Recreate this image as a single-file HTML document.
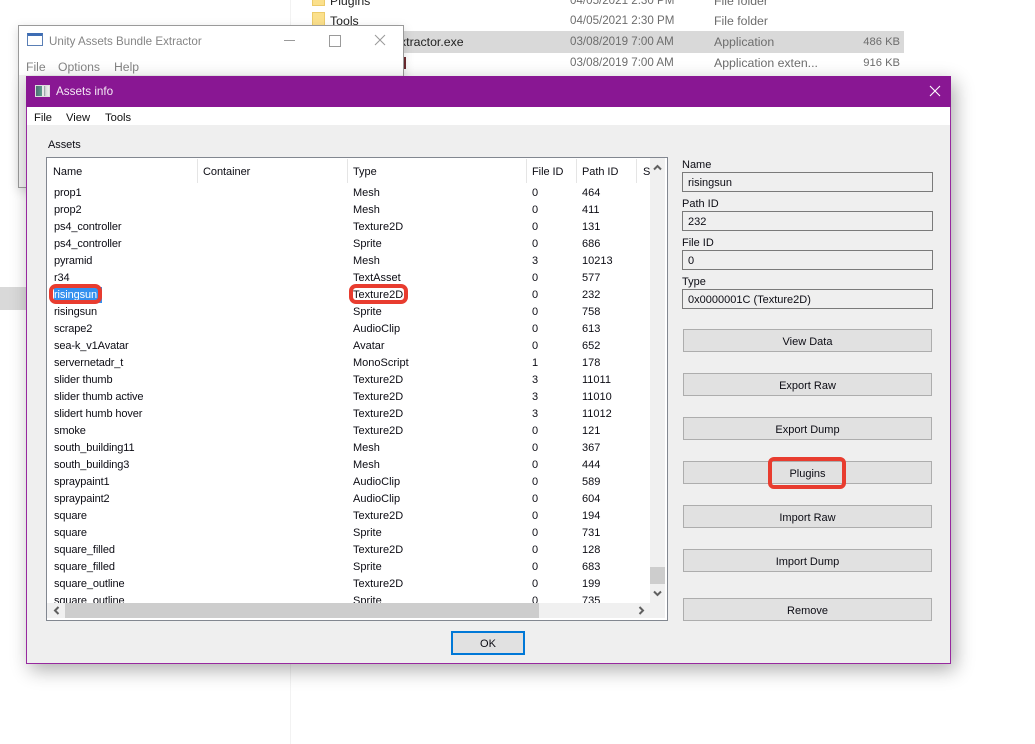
<!DOCTYPE html>
<html><head><meta charset="utf-8">
<style>
html,body{margin:0;padding:0;background:#fff;}
body{width:1035px;height:744px;position:relative;overflow:hidden;font-family:"Liberation Sans",sans-serif;font-size:11px;color:#0c0c14;}
.a{position:absolute;white-space:nowrap;}
.ex{font-size:12.3px;color:#6d6d6d;line-height:16px;}
.d{font-size:11.6px;}
.z{font-size:11.2px;}
.g{color:#858585;font-size:12.2px;line-height:16px;}
.m{font-size:11.2px;line-height:14px;color:#111;}
.h{line-height:14px;letter-spacing:-.05px;}
.sep{position:absolute;top:159px;width:1px;height:24px;background:#e5e5e5;}
.list{position:absolute;left:47px;top:184px;width:603px;height:419px;overflow:hidden;background:#fff;}
.r{position:absolute;left:0;height:17px;line-height:16px;white-space:nowrap;}
.r span{position:absolute;top:1px;}
.r span:nth-child(1){left:7px;letter-spacing:-.12px;}
.r span:nth-child(2){left:306px;}
.r span:nth-child(3){left:485px;}
.r span:nth-child(4){left:535px;}
.lb{position:absolute;left:682px;line-height:14px;white-space:nowrap;}
.f{position:absolute;left:682px;height:18px;border:1px solid #7a7a7a;background:#efefef;line-height:20px;padding-left:5px;box-sizing:content-box;width:244px;}
.b{position:absolute;left:683px;width:247px;height:21px;border:1px solid #adadad;background:#e1e1e1;text-align:center;line-height:24px;}
.red{position:absolute;border:4px solid #e83c2f;box-sizing:border-box;}
</style></head><body>

<!-- Explorer background -->
<div class="a" style="left:290px;top:0;width:1px;height:744px;background:#f2f2f2"></div>
<div class="a" style="left:0;top:287px;width:27px;height:23px;background:#d9d9d9"></div>
<div class="a" style="left:312px;top:-6px;width:13px;height:12px;background:#fbe08c;border:1px solid #eccb6a;box-sizing:border-box"></div>
<div class="a" style="left:312px;top:12px;width:13px;height:16px;background:#fbe08c;border:1px solid #eccb6a;box-sizing:border-box"></div>
<div class="a ex" style="left:330px;top:-7px;color:#222">Plugins</div>
<div class="a ex" style="left:330px;top:13px;color:#222">Tools</div>
<div class="a" style="left:404px;top:31px;width:500px;height:22px;background:#d9d9d9"></div>
<div class="a ex" style="left:400px;top:34px;color:#222">xtractor.exe</div>
<div class="a" style="left:404px;top:57px;width:2px;height:12px;background:#6d2b30"></div>
<div class="a ex d" style="left:570px;top:-7px">04/05/2021 2:30 PM</div>
<div class="a ex" style="left:714px;top:-7px">File folder</div>
<div class="a ex d" style="left:570px;top:13px">04/05/2021 2:30 PM</div>
<div class="a ex" style="left:714px;top:13px">File folder</div>
<div class="a ex d" style="left:570px;top:34px">03/08/2019 7:00 AM</div>
<div class="a ex" style="left:714px;top:34px">Application</div>
<div class="a ex z" style="right:135px;top:34px">486 KB</div>
<div class="a ex d" style="left:570px;top:55px">03/08/2019 7:00 AM</div>
<div class="a ex" style="left:714px;top:55px">Application exten...</div>
<div class="a ex z" style="right:135px;top:55px">916 KB</div>

<!-- Parent window -->
<div class="a" style="left:18px;top:25px;width:386px;height:163px;background:#fff;border:1px solid #9a9a9a;box-sizing:border-box;box-shadow:0 3px 10px rgba(0,0,0,.15)">
  <div class="a" style="left:0;top:49px;width:384px;height:112px;background:#f0f0f0"></div>
</div>
<div class="a" style="left:27px;top:33px;width:16px;height:13px;background:#fff;border:1px solid #5a7fb5;border-top:3px solid #3e6db4;box-sizing:border-box"></div>
<div class="a g" style="left:49px;top:34px;font-size:11.6px">Unity Assets Bundle Extractor</div>
<div class="a" style="left:284px;top:40px;width:11px;height:1px;background:#9a9a9a"></div>
<div class="a" style="left:329px;top:35px;width:10px;height:10px;border:1px solid #9a9a9a"></div>
<svg class="a" style="left:374px;top:34px" width="12" height="12"><path d="M1 1L11 11M11 1L1 11" stroke="#9a9a9a" stroke-width="1" fill="none"/></svg>
<div class="a g" style="left:26px;top:59px">File</div>
<div class="a g" style="left:58px;top:59px">Options</div>
<div class="a g" style="left:114px;top:59px">Help</div>

<!-- Main dialog -->
<div class="a" style="left:26px;top:76px;width:925px;height:588px;background:#efefef;border:1px solid #97299f;box-sizing:border-box;box-shadow:4px 6px 18px rgba(0,0,0,.32)"></div>
<div class="a" style="left:26px;top:76px;width:925px;height:31px;background:#891793"></div>
<div class="a" style="left:27px;top:107px;width:923px;height:18px;background:#fff"></div>
<div class="a" style="left:35px;top:85px;width:15px;height:12px;background:linear-gradient(90deg,#4c6f72 0,#5f9a8c 45%,#e8e8e8 46%,#e8e8e8 62%,#8f9aa0 63%,#d8dcdc 75%,#eee 100%);border:1px solid #ddd;box-sizing:border-box"></div>
<div class="a" style="left:56px;top:85px;color:#f4e8f5;font-size:11.7px;line-height:14px">Assets info</div>
<svg class="a" style="left:929px;top:85px" width="12" height="12"><path d="M1 1L11 11M11 1L1 11" stroke="#fff" stroke-width="1.1" fill="none"/></svg>
<div class="a m" style="left:34px;top:111px">File</div>
<div class="a m" style="left:66px;top:111px">View</div>
<div class="a m" style="left:105px;top:111px">Tools</div>
<div class="a h" style="left:48px;top:138px">Assets</div>

<!-- List frame -->
<div class="a" style="left:46px;top:157px;width:622px;height:464px;background:#fff;border:1px solid #828790;box-sizing:border-box"></div>
<div class="a h" style="left:53px;top:165px">Name</div>
<div class="a h" style="left:203px;top:165px">Container</div>
<div class="a h" style="left:353px;top:165px">Type</div>
<div class="a h" style="left:532px;top:165px">File ID</div>
<div class="a h" style="left:582px;top:165px">Path ID</div>
<div class="a h" style="left:643px;top:165px">S</div>
<div class="sep" style="left:197px"></div>
<div class="sep" style="left:347px"></div>
<div class="sep" style="left:526px"></div>
<div class="sep" style="left:576px"></div>
<div class="sep" style="left:636px"></div>

<div class="list">
<div class="r" style="top:0"><span>prop1</span><span>Mesh</span><span>0</span><span>464</span></div>
<div class="r" style="top:17px"><span>prop2</span><span>Mesh</span><span>0</span><span>411</span></div>
<div class="r" style="top:34px"><span>ps4_controller</span><span>Texture2D</span><span>0</span><span>131</span></div>
<div class="r" style="top:51px"><span>ps4_controller</span><span>Sprite</span><span>0</span><span>686</span></div>
<div class="r" style="top:68px"><span>pyramid</span><span>Mesh</span><span>3</span><span>10213</span></div>
<div class="r" style="top:85px"><span>r34</span><span>TextAsset</span><span>0</span><span>577</span></div>
<div class="r" style="top:102px"><span style="color:#fff;background:#3390ef;width:48px;">risingsun</span><span>Texture2D</span><span>0</span><span>232</span></div>
<div class="r" style="top:119px"><span>risingsun</span><span>Sprite</span><span>0</span><span>758</span></div>
<div class="r" style="top:136px"><span>scrape2</span><span>AudioClip</span><span>0</span><span>613</span></div>
<div class="r" style="top:153px"><span>sea-k_v1Avatar</span><span>Avatar</span><span>0</span><span>652</span></div>
<div class="r" style="top:170px"><span>servernetadr_t</span><span>MonoScript</span><span>1</span><span>178</span></div>
<div class="r" style="top:187px"><span>slider thumb</span><span>Texture2D</span><span>3</span><span>11011</span></div>
<div class="r" style="top:204px"><span>slider thumb active</span><span>Texture2D</span><span>3</span><span>11010</span></div>
<div class="r" style="top:221px"><span>slidert humb hover</span><span>Texture2D</span><span>3</span><span>11012</span></div>
<div class="r" style="top:238px"><span>smoke</span><span>Texture2D</span><span>0</span><span>121</span></div>
<div class="r" style="top:255px"><span>south_building11</span><span>Mesh</span><span>0</span><span>367</span></div>
<div class="r" style="top:272px"><span>south_building3</span><span>Mesh</span><span>0</span><span>444</span></div>
<div class="r" style="top:289px"><span>spraypaint1</span><span>AudioClip</span><span>0</span><span>589</span></div>
<div class="r" style="top:306px"><span>spraypaint2</span><span>AudioClip</span><span>0</span><span>604</span></div>
<div class="r" style="top:323px"><span>square</span><span>Texture2D</span><span>0</span><span>194</span></div>
<div class="r" style="top:340px"><span>square</span><span>Sprite</span><span>0</span><span>731</span></div>
<div class="r" style="top:357px"><span>square_filled</span><span>Texture2D</span><span>0</span><span>128</span></div>
<div class="r" style="top:374px"><span>square_filled</span><span>Sprite</span><span>0</span><span>683</span></div>
<div class="r" style="top:391px"><span>square_outline</span><span>Texture2D</span><span>0</span><span>199</span></div>
<div class="r" style="top:408px"><span>square_outline</span><span>Sprite</span><span>0</span><span>735</span></div>
</div>

<!-- Scrollbars -->
<div class="a" style="left:650px;top:158px;width:15px;height:460px;background:#f0f0f0"></div>
<div class="a" style="left:650px;top:567px;width:15px;height:17px;background:#cdcdcd"></div>
<svg class="a" style="left:653px;top:164px" width="9" height="7"><path d="M1 5.5L4.5 2L8 5.5" stroke="#606060" stroke-width="2" fill="none"/></svg>
<svg class="a" style="left:653px;top:590px" width="9" height="7"><path d="M1 1.5L4.5 5L8 1.5" stroke="#606060" stroke-width="2" fill="none"/></svg>
<div class="a" style="left:47px;top:603px;width:603px;height:15px;background:#f0f0f0"></div>
<div class="a" style="left:65px;top:603px;width:474px;height:15px;background:#cdcdcd"></div>
<svg class="a" style="left:53px;top:606px" width="7" height="9"><path d="M5.5 1L2 4.5L5.5 8" stroke="#606060" stroke-width="2" fill="none"/></svg>
<svg class="a" style="left:638px;top:606px" width="7" height="9"><path d="M1.5 1L5 4.5L1.5 8" stroke="#606060" stroke-width="2" fill="none"/></svg>

<!-- Right fields -->
<div class="lb" style="top:158px">Name</div>
<div class="f" style="top:172px">risingsun</div>
<div class="lb" style="top:197px">Path ID</div>
<div class="f" style="top:211px">232</div>
<div class="lb" style="top:236px">File ID</div>
<div class="f" style="top:250px">0</div>
<div class="lb" style="top:275px">Type</div>
<div class="f" style="top:289px">0x0000001C (Texture2D)</div>

<div class="b" style="top:329px">View Data</div>
<div class="b" style="top:373px">Export Raw</div>
<div class="b" style="top:417px">Export Dump</div>
<div class="b" style="top:461px">Plugins</div>
<div class="b" style="top:505px">Import Raw</div>
<div class="b" style="top:549px">Import Dump</div>
<div class="b" style="top:598px">Remove</div>

<div class="a" style="left:451px;top:631px;width:74px;height:24px;border:2px solid #0078d7;background:#e1e1e1;box-sizing:border-box;text-align:center;line-height:23px">OK</div>

<!-- Red highlights -->
<div class="red" style="left:49px;top:284px;width:53px;height:20px;border-radius:7px"></div>
<div class="red" style="left:349px;top:284px;width:59px;height:20px;border-radius:7px"></div>
<div class="red" style="left:768px;top:457px;width:78px;height:32px;border-radius:6px"></div>

</body></html>
